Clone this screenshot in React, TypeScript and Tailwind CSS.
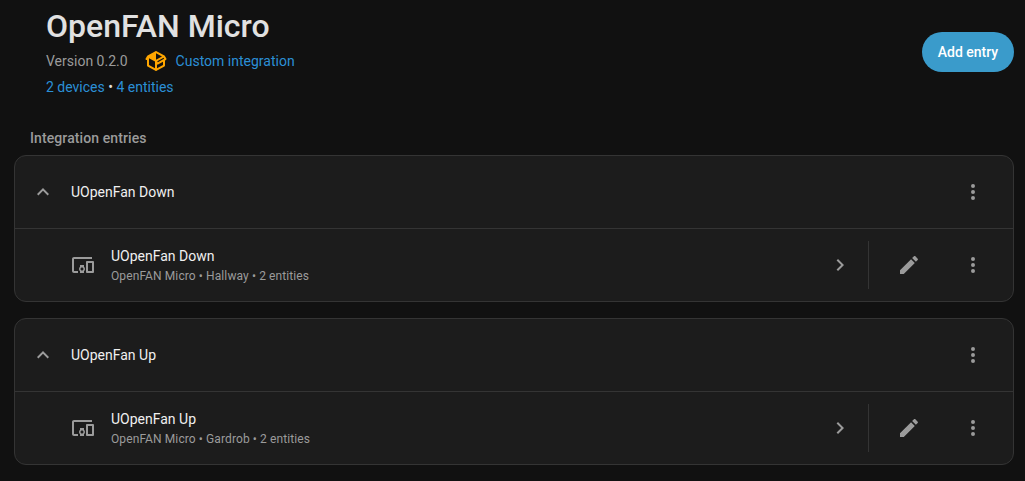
import React from 'react'

const mdi = {
  packageVariant:
    'M2,10.96C1.5,10.68 1.35,10.07 1.63,9.59L3.13,7C3.24,6.8 3.41,6.66 3.6,6.58L11.43,2.18C11.59,2.06 11.79,2 12,2C12.21,2 12.41,2.06 12.57,2.18L20.47,6.62C20.66,6.72 20.82,6.88 20.91,7.08L22.36,9.6C22.64,10.08 22.47,10.69 22,10.96L21,11.54V16.5C21,16.88 20.79,17.21 20.47,17.38L12.57,21.82C12.41,21.94 12.21,22 12,22C11.79,22 11.59,21.94 11.43,21.82L3.53,17.38C3.21,17.21 3,16.88 3,16.5V10.96C2.7,11.13 2.32,11.14 2,10.96M12,4.15V4.15L12,10.85V10.85L17.96,7.5L12,4.15M5,15.91L11,19.29V12.58L5,9.21V15.91M19,15.91V12.69L14,15.59C13.67,15.77 13.3,15.76 13,15.6V19.29L19,15.91M13.85,13.36L20.13,9.73L19.55,8.72L13.27,12.35L13.85,13.36Z',
  devices:
    'M3 6H21V4H3C1.9 4 1 4.9 1 6V18C1 19.1 1.9 20 3 20H7V18H3V6M13 12H9V13.78C8.39 14.33 8 15.11 8 16C8 16.89 8.39 17.67 9 18.22V20H13V18.22C13.61 17.67 14 16.88 14 16S13.61 14.33 13 13.78V12M11 17.5C10.17 17.5 9.5 16.83 9.5 16S10.17 14.5 11 14.5 12.5 15.17 12.5 16 11.83 17.5 11 17.5M22 8H16C15.5 8 15 8.5 15 9V19C15 19.5 15.5 20 16 20H22C22.5 20 23 19.5 23 19V9C23 8.5 22.5 8 22 8M21 18H17V10H21V18Z',
  pencil:
    'M20.71,7.04C21.1,6.65 21.1,6 20.71,5.63L18.37,3.29C18,2.9 17.35,2.9 16.96,3.29L15.12,5.12L18.87,8.87M3,17.25V21H6.75L17.81,9.93L14.06,6.18L3,17.25Z',
  dots:
    'M12,16A2,2 0 0,1 14,18A2,2 0 0,1 12,20A2,2 0 0,1 10,18A2,2 0 0,1 12,16M12,10A2,2 0 0,1 14,12A2,2 0 0,1 12,14A2,2 0 0,1 10,12A2,2 0 0,1 12,10M12,4A2,2 0 0,1 14,6A2,2 0 0,1 12,8A2,2 0 0,1 10,6A2,2 0 0,1 12,4Z',
  chevronUp: 'M7.41,15.41L12,10.83L16.59,15.41L18,14L12,8L6,14L7.41,15.41Z',
  chevronRight: 'M8.59,16.58L13.17,12L8.59,7.41L10,6L16,12L10,18L8.59,16.58Z',
}

const Icon = ({ d, className }: { d: string; className: string }) => (
  <svg viewBox="0 0 24 24" className={`h-6 w-6 shrink-0 fill-current ${className}`}>
    <path d={d} />
  </svg>
)

const entries = [
  { name: 'UOpenFan Down', area: 'Hallway' },
  { name: 'UOpenFan Up', area: 'Gardrob' },
]

const EntryCard = ({ name, area }: { name: string; area: string }) => (
  <div className="overflow-hidden rounded-xl border border-[#343434] bg-[#1c1c1c]">
    {/* 헤더 */}
    <div className="flex h-[73px] items-center border-b border-[#343434] pl-4 pr-[28px]">
      <Icon d={mdi.chevronUp} className="text-[#9b9b9b]" />
      <div className="ml-4 flex-1 text-sm text-[#f0f0f0]">{name}</div>
      <Icon d={mdi.dots} className="text-[#9b9b9b]" />
    </div>

    {/* 기기 */}
    <div className="flex h-[72px] items-center pl-[56px] pr-[28px]">
      <Icon d={mdi.devices} className="text-[#9b9b9b]" />
      <div className="ml-4 flex-1">
        <div className="text-sm leading-5 text-[#f0f0f0]">{name}</div>
        <div className="mt-[2px] text-xs leading-4 tracking-[0.1px] text-[#9b9b9b]">
          OpenFAN Micro • {area} • 2 entities
        </div>
      </div>
      <Icon d={mdi.chevronRight} className="text-[#9b9b9b]" />
      <div className="mx-4 h-12 w-px bg-[#343434]" />
      <Icon d={mdi.pencil} className="ml-[12px] text-[#9b9b9b]" />
      <Icon d={mdi.dots} className="ml-[40px] text-[#9b9b9b]" />
    </div>
  </div>
)

export default function App() {
  return (
    <div className="h-[481px] w-[1025px] overflow-hidden bg-[#111111] font-['Roboto',sans-serif]">
      <div className="flex items-start justify-between pr-[11px] pl-[46px]">
        <div>
          <h1 className="pt-[6px] text-[32px] leading-10 font-medium text-[#e1e1e1]">OpenFAN Micro</h1>
          <div className="mt-[1px] flex h-7 items-center text-sm text-[#9b9b9b]">
            <span>Version 0.2.0</span>
            <Icon d={mdi.packageVariant} className="ml-4 text-[#ffa600]" />
            <span className="ml-[8px] text-[#2b8fd6]">Custom integration</span>
          </div>
          <div className="mt-[-2px] h-7 text-sm leading-7 text-[#2b8fd6]">
            2 devices <span className="text-[#e1e1e1]">•</span> 4 entities
          </div>
        </div>
        <button className="mt-[32px] h-10 w-[92px] rounded-full bg-[#3a9bcb] text-sm font-medium text-white">
          Add entry
        </button>
      </div>

      <div className="mt-[27px] pl-[30px] text-sm leading-5 font-medium tracking-[0.1px] text-[#9b9b9b]">Integration entries</div>

      <div className="mt-[7px] ml-[14px] flex w-[1000px] flex-col gap-4">
        {entries.map((entry) => (
          <EntryCard key={entry.name} {...entry} />
        ))}
      </div>
    </div>
  )
}
